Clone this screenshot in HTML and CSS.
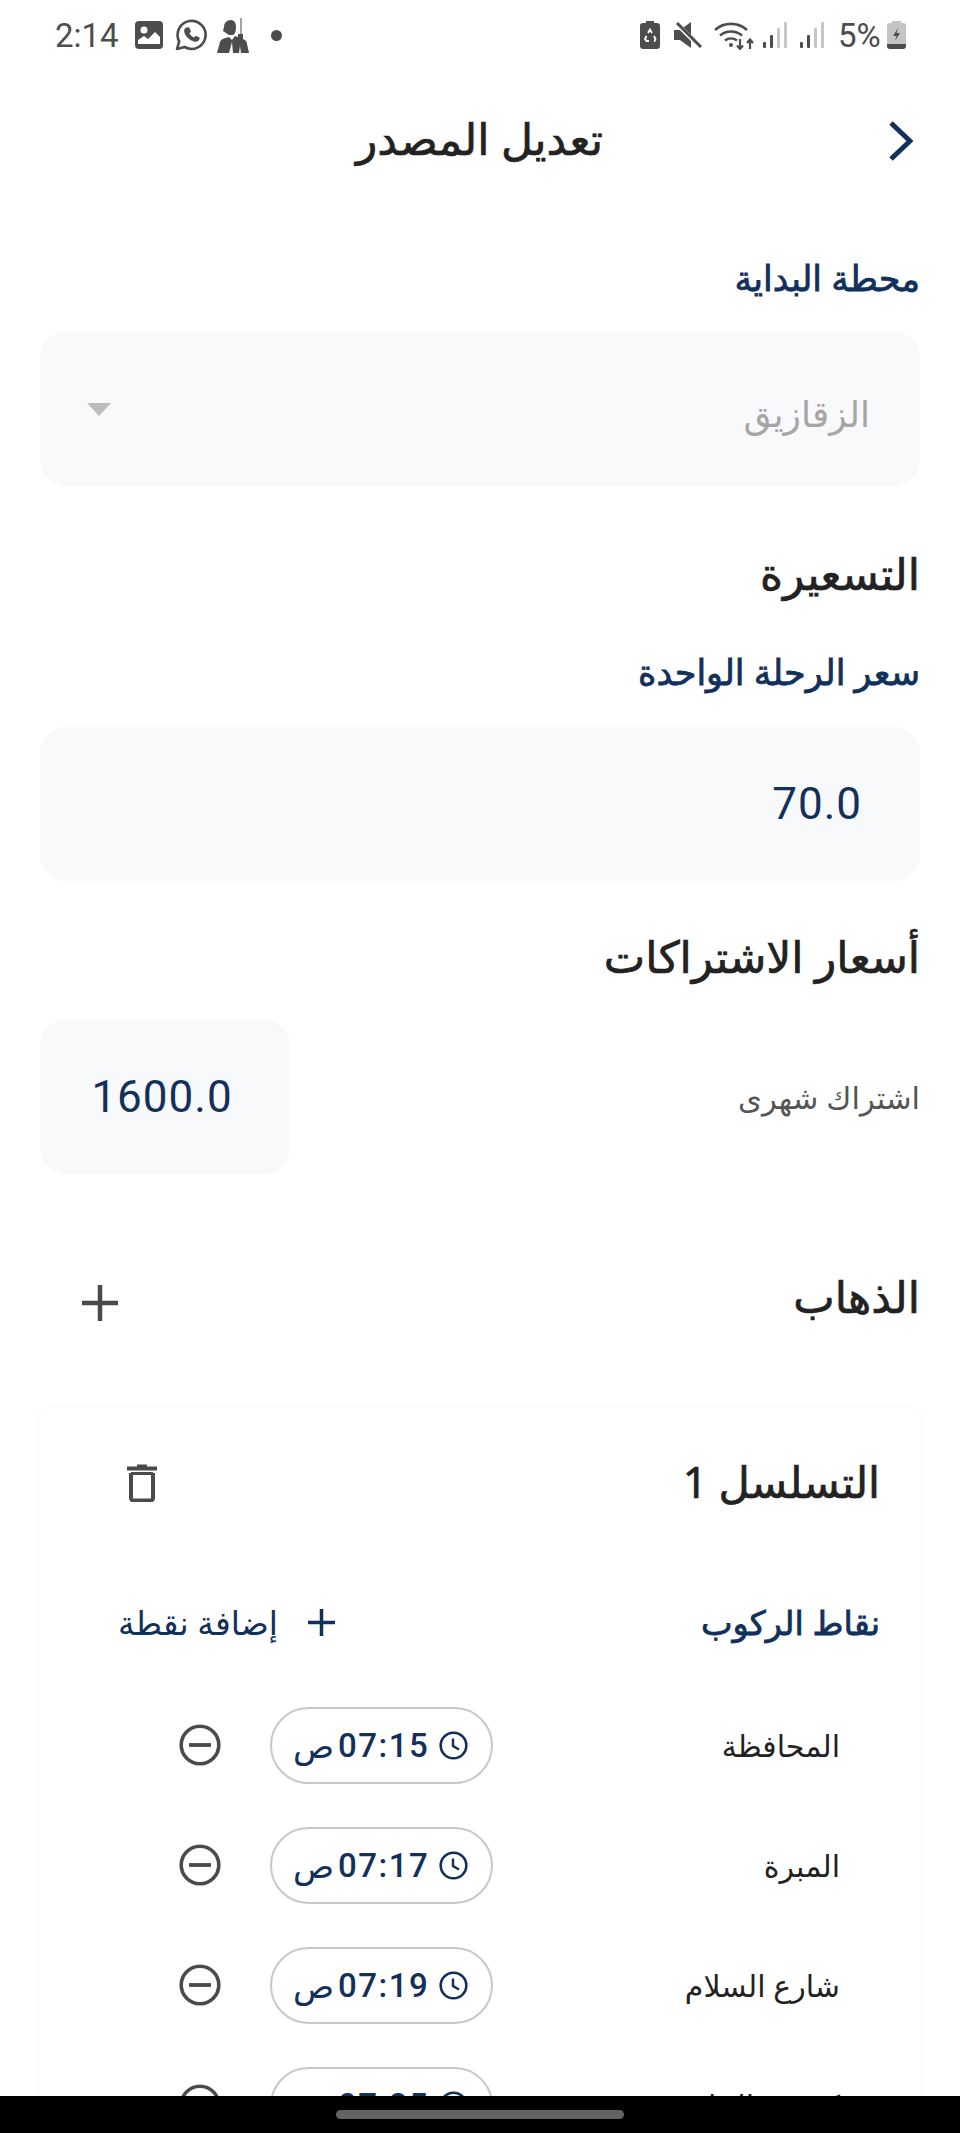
FILE: index.html
```html
<!DOCTYPE html>
<html lang="ar" dir="rtl">
<head>
  <meta charset="UTF-8" />
  <meta name="viewport" content="width=device-width, initial-scale=1.0" />
  <title>تعديل المصدر</title>
  <link rel="stylesheet" href="styles.css">
</head>
<body>
  <div class="screen">
    <div class="status-bar" dir="ltr">
      <span class="clock">2:14</span>
      <svg class="st-photo" width="28" height="28" viewBox="0 0 28 28"><rect width="28" height="28" rx="4" fill="#4d4d4d"/><circle cx="9" cy="9" r="3.5" fill="#fff"/><path d="M3 23v-4l6-4 4 3 7-7 5 5v7z" fill="#fff"/></svg>
      <svg class="st-wa" width="32" height="32" viewBox="0 0 32 32"><path d="M2 30l2.200-7.600A14 14 0 1 1 9.600 28z" fill="none" stroke="#4d4d4d" stroke-width="2.600" stroke-linejoin="round"/><path d="M11.500 8.500l2.500-.3 2 4-1.500 2c1 2 2.500 3.300 4.500 4.300l2-1.700 3.800 2c-.3 3-3 4.500-5.800 3.700-5-1.500-9-5.500-9.800-10-.3-1.700.5-3 1.800-4z" fill="#4d4d4d"/></svg>
      <svg class="st-man" width="32" height="36" viewBox="0 0 32 36"><path d="M23.500 0h1v16h-1z" fill="#4d4d4d"/><path d="M7 9c0-4 3-7 6.500-7 4 0 5.500 3 5.500 7s-1 7-3 8h-4l-3-2-3-2z" fill="#4d4d4d"/><path d="M0 35l3-11c1-3 5-4 9-5l3 3 3-4 3 1v-3h5v5c3 1 4 3 4 5l2 9H24l-1-7-1 7h-6l-1-11-3 11z" fill="#4d4d4d"/></svg>
      <span class="st-dot"></span>
      <span class="st-spacer"></span>
      <svg class="st-saver" width="20" height="28" viewBox="0 0 20 28"><path d="M6 0h8v2h3a3 3 0 0 1 3 3v20a3 3 0 0 1-3 3H3a3 3 0 0 1-3-3V5a3 3 0 0 1 3-3h3z" fill="#4d4d4d"/><path d="M8 12l2-3.500 2 3.500M6.500 15L5 18l1.500 2H9M14 20h.500l1-2-1.500-3" fill="none" stroke="#fff" stroke-width="1.800"/></svg>
      <svg class="st-mute" width="28" height="26" viewBox="0 0 28 26"><path d="M0 8h6l11-8v26L6 18H0z" fill="#4d4d4d"/><path d="M2 1l24 24" stroke="#fff" stroke-width="4.500"/><path d="M3 1l24 24" stroke="#4d4d4d" stroke-width="3"/></svg>
      <svg class="st-wifi" width="42" height="30" viewBox="0 0 42 30"><path d="M1 10a24 24 0 0 1 32 0M6 15.500a17 17 0 0 1 22 0M11 20.500a10 10 0 0 1 12 0" fill="none" stroke="#4d4d4d" stroke-width="2.600"/><circle cx="17" cy="25" r="2" fill="#4d4d4d"/><path d="M26 19v10M23 25.500l3 3.500 3-3.500M36 29V20M33 23l3-3.500 3 3.500" fill="none" stroke="#4d4d4d" stroke-width="2.200"/></svg>
      <svg class="st-signal" width="24" height="26" viewBox="0 0 24 26"><rect x="0" y="20" width="3" height="6" rx="1" fill="#4d4d4d"/><rect x="7" y="13" width="3" height="13" rx="1" fill="#4d4d4d"/><rect x="14" y="6" width="3" height="20" rx="1" fill="#c6c6c6"/><rect x="21" y="0" width="3" height="26" rx="1" fill="#c6c6c6"/></svg>
      <svg class="st-signal st-signal-2" width="24" height="26" viewBox="0 0 24 26"><rect x="0" y="20" width="3" height="6" rx="1" fill="#4d4d4d"/><rect x="7" y="13" width="3" height="13" rx="1" fill="#4d4d4d"/><rect x="14" y="6" width="3" height="20" rx="1" fill="#c6c6c6"/><rect x="21" y="0" width="3" height="26" rx="1" fill="#c6c6c6"/></svg>
      <span class="st-percent">5%</span>
      <svg class="st-battery" width="19" height="28" viewBox="0 0 19 28"><path d="M5 0h9v2h2a3 3 0 0 1 3 3v18H0V5a3 3 0 0 1 3-3h2z" fill="#c4c4c4"/><path d="M0 23h19v2a3 3 0 0 1-3 3H3a3 3 0 0 1-3-3z" fill="#4d4d4d"/><path d="M11 7l-5 8h3.500l-1.500 5 5-8H9.500z" fill="#4d4d4d"/></svg>
    </div>

    <header class="title-bar">
      <svg class="back-icon" width="24" height="40" viewBox="0 0 24 40"><path d="M2 2l19 18L2 38" fill="none" stroke="#12305c" stroke-width="5"/></svg>
      <h1>تعديل المصدر</h1>
      <span></span>
    </header>

    <main class="form">
      <label class="field-label start-label">محطة البداية</label>
      <div class="field select-field">
        <span class="select-value">الزقازيق</span>
        <span class="select-arrow"></span>
      </div>

      <h2 class="pricing-title">التسعيرة</h2>
      <label class="field-label trip-label">سعر الرحلة الواحدة</label>
      <div class="field number-field">70.0</div>

      <h2 class="subs-title">أسعار الاشتراكات</h2>
      <div class="sub-row">
        <span class="sub-name">اشتراك شهرى</span>
        <div class="field sub-field">1600.0</div>
      </div>

      <div class="direction-row">
        <h2>الذهاب</h2>
        <svg width="36" height="36" viewBox="0 0 36 36"><path d="M18 0v36M0 18h36" stroke="#4a4a4a" stroke-width="4.500"/></svg>
      </div>

      <section class="card">
        <div class="card-head">
          <h3>التسلسل 1</h3>
          <svg width="30" height="38" viewBox="0 0 30 38"><path d="M10 2.500h10M0 4.500h30" stroke="#4a4a4a" stroke-width="4"/><path d="M4 9v25a2.500 2.500 0 0 0 2.500 2.500h17A2.500 2.500 0 0 0 26 34V9" fill="none" stroke="#4a4a4a" stroke-width="4"/><path d="M4 9.500h22" stroke="#4a4a4a" stroke-width="3"/></svg>
        </div>

        <div class="points-head">
          <h4>نقاط الركوب</h4>
          <div class="add-point">
            <svg width="27" height="27" viewBox="0 0 27 27"><path d="M13.500 0v27M0 13.500h27" stroke="#12305c" stroke-width="3.500"/></svg>
            <span>إضافة نقطة</span>
          </div>
        </div>

        <div class="point">
          <span class="point-name">المحافظة</span>
          <div class="time-pill" dir="ltr">
            <span class="ampm">ص</span><span class="time">07:15</span>
            <svg width="29" height="29" viewBox="0 0 29 29"><circle cx="14.500" cy="14.500" r="12.800" fill="none" stroke="#12305c" stroke-width="2.600"/><path d="M14 7.500v7.500l6 3.500" fill="none" stroke="#12305c" stroke-width="2.400"/></svg>
          </div>
          <svg class="minus" width="42" height="42" viewBox="0 0 42 42"><circle cx="21" cy="21" r="18.800" fill="none" stroke="#4a4a4a" stroke-width="3.600"/><path d="M10 21h22" stroke="#4a4a4a" stroke-width="3.800"/></svg>
        </div>
        <div class="point">
          <span class="point-name">المبرة</span>
          <div class="time-pill" dir="ltr">
            <span class="ampm">ص</span><span class="time">07:17</span>
            <svg width="29" height="29" viewBox="0 0 29 29"><circle cx="14.500" cy="14.500" r="12.800" fill="none" stroke="#12305c" stroke-width="2.600"/><path d="M14 7.500v7.500l6 3.500" fill="none" stroke="#12305c" stroke-width="2.400"/></svg>
          </div>
          <svg class="minus" width="42" height="42" viewBox="0 0 42 42"><circle cx="21" cy="21" r="18.800" fill="none" stroke="#4a4a4a" stroke-width="3.600"/><path d="M10 21h22" stroke="#4a4a4a" stroke-width="3.800"/></svg>
        </div>
        <div class="point">
          <span class="point-name">شارع السلام</span>
          <div class="time-pill" dir="ltr">
            <span class="ampm">ص</span><span class="time">07:19</span>
            <svg width="29" height="29" viewBox="0 0 29 29"><circle cx="14.500" cy="14.500" r="12.800" fill="none" stroke="#12305c" stroke-width="2.600"/><path d="M14 7.500v7.500l6 3.500" fill="none" stroke="#12305c" stroke-width="2.400"/></svg>
          </div>
          <svg class="minus" width="42" height="42" viewBox="0 0 42 42"><circle cx="21" cy="21" r="18.800" fill="none" stroke="#4a4a4a" stroke-width="3.600"/><path d="M10 21h22" stroke="#4a4a4a" stroke-width="3.800"/></svg>
        </div>
        <div class="point">
          <span class="point-name">كوبري الجامعة</span>
          <div class="time-pill" dir="ltr">
            <span class="ampm">ص</span><span class="time">07:25</span>
            <svg width="29" height="29" viewBox="0 0 29 29"><circle cx="14.500" cy="14.500" r="12.800" fill="none" stroke="#12305c" stroke-width="2.600"/><path d="M14 7.500v7.500l6 3.500" fill="none" stroke="#12305c" stroke-width="2.400"/></svg>
          </div>
          <svg class="minus" width="42" height="42" viewBox="0 0 42 42"><circle cx="21" cy="21" r="18.800" fill="none" stroke="#4a4a4a" stroke-width="3.600"/><path d="M10 21h22" stroke="#4a4a4a" stroke-width="3.800"/></svg>
        </div>
      </section>
    </main>
  </div>

  <div class="nav-bar"><span class="nav-handle"></span></div>
</body>
</html>
```

FILE: styles.css
```css
:root {
  --navy: #12305c;
  --ink: #222222;
  --icon: #4a4a4a;
  --field-bg: #f8f9fb;
}

html, body {
  margin: 0;
  height: 2133px;
  overflow: hidden;
}

body {
  display: flex;
  flex-direction: column;
  background: #fff;
  color: var(--ink);
  font-family: 'Noto Sans', 'DejaVu Sans', sans-serif;
}

h1, h2, h3, h4 {
  margin: 0;
  font-weight: 400;
}

.screen {
  flex: 1;
  min-height: 0;
  overflow: hidden;
}

/* status bar */
.status-bar {
  display: flex;
  align-items: center;
  height: 70px;
  padding: 0 54px 0 55px;
  color: #4d4d4d;
  font-family: Roboto, sans-serif;
  font-size: 33px;
}

.clock { width: 80px; }
.st-wa { margin-left: 12px; }
.st-man { margin-left: 10px; margin-top: 2px; }

.st-dot {
  width: 11px;
  height: 11px;
  margin-left: 22px;
  border-radius: 50%;
  background: #4d4d4d;
}

.st-spacer { flex: 1; }
.st-mute { margin-left: 14px; }
.st-wifi { margin-left: 12px; }
.st-signal { margin-left: 7px; }
.st-signal-2 { margin-left: 13px; }
.st-percent { margin-left: 14px; width: 49px; }

/* title */
.title-bar {
  display: grid;
  grid-template-columns: 1fr auto 1fr;
  align-items: center;
  height: 68px;
  margin-top: 34px;
  padding: 0 47px 0 46px;
}

.back-icon { margin-top: 5px; }

.title-bar h1 {
  font-size: 44px;
  -webkit-text-stroke: 0.7px var(--ink);
}

/* form */
.form {
  padding: 0 40px;
}

.field-label {
  display: block;
  padding-bottom: 6px;
  color: var(--navy);
  font-size: 35px;
  line-height: 34px;
  -webkit-text-stroke: 0.8px var(--navy);
}

.start-label { margin-top: 89px; }

.field {
  box-sizing: border-box;
  height: 154px;
  margin-top: 31px;
  border-radius: 26px;
  background: var(--field-bg);
}

.select-field {
  display: flex;
  align-items: center;
  justify-content: space-between;
  padding: 0 50px 0 47px;
}

.select-value {
  margin-top: 8px;
  color: #a6a6a6;
  font-size: 36px;
}

.select-arrow {
  width: 0;
  height: 0;
  border-top: 13px solid #bdbdbd;
  border-left: 12px solid transparent;
  border-right: 12px solid transparent;
}

h2 {
  padding-bottom: 6px;
  font-size: 44px;
  line-height: 44px;
  -webkit-text-stroke: 0.7px var(--ink);
}

.pricing-title { margin-top: 65px; }
.trip-label { margin-top: 54px; }

.number-field {
  display: flex;
  align-items: center;
  margin-top: 32px;
  padding: 0 58px;
  color: var(--navy);
  font-family: Roboto, sans-serif;
  font-size: 44px;
  letter-spacing: 1px;
}

.subs-title { margin-top: 53px; }

.sub-row {
  display: flex;
  align-items: center;
  justify-content: space-between;
  margin-top: 36px;
}

.sub-name {
  color: #555;
  font-size: 30.5px;
}

.sub-field {
  display: flex;
  align-items: center;
  justify-content: center;
  width: 250px;
  margin-top: 0;
  padding-right: 6px;
  color: var(--navy);
  font-family: Roboto, sans-serif;
  font-size: 44px;
  letter-spacing: 1px;
}

.direction-row {
  display: flex;
  align-items: center;
  justify-content: space-between;
  height: 50px;
  margin-top: 100px;
  padding-left: 42px;
}

.direction-row svg { margin-top: 8px; }

/* sequence card */
.card {
  box-sizing: border-box;
  margin: 82px -2px 0;
  padding: 0 40px 0 42px;
  height: 800px;
  border: 2px solid #fcfcfc;
  border-bottom: none;
  border-radius: 12px 12px 0 0;
}

.card-head {
  display: flex;
  align-items: center;
  justify-content: space-between;
  margin-top: 44px;
  padding-left: 45px;
}

.card-head svg { margin-top: 2px; }

.card-head h3 {
  font-size: 43px;
  -webkit-text-stroke: 0.7px var(--ink);
}

.points-head {
  display: flex;
  align-items: center;
  justify-content: space-between;
  height: 44px;
  margin-top: 89px;
}

.points-head h4 {
  color: var(--navy);
  font-size: 33.5px;
  -webkit-text-stroke: 0.8px var(--navy);
}

.add-point {
  display: flex;
  align-items: center;
  gap: 30px;
  margin-left: 36px;
  color: var(--navy);
  font-size: 33px;
}

.point {
  display: flex;
  align-items: center;
  height: 120px;
  padding-right: 40px;
}

.points-head + .point { margin-top: 41px; }

.point-name {
  flex: 1;
  font-size: 30px;
}

.time-pill {
  box-sizing: border-box;
  display: flex;
  align-items: center;
  width: 223px;
  height: 77px;
  padding: 0 23px 0 21px;
  border: 2px solid #c8c8c8;
  border-radius: 40px;
  color: var(--navy);
}

.ampm { font-size: 34px; }

.time {
  flex: 1;
  padding-left: 4px;
  font-family: Roboto, sans-serif;
  font-size: 33px;
  font-weight: 500;
  letter-spacing: 1.5px;
}

.minus {
  margin: 0 49px 0 97px;
}

/* android nav bar */
.nav-bar {
  flex: none;
  display: flex;
  align-items: center;
  justify-content: center;
  height: 37px;
  background: #000;
}

.nav-handle {
  width: 288px;
  height: 9px;
  border-radius: 5px;
  background: #636363;
}
```
